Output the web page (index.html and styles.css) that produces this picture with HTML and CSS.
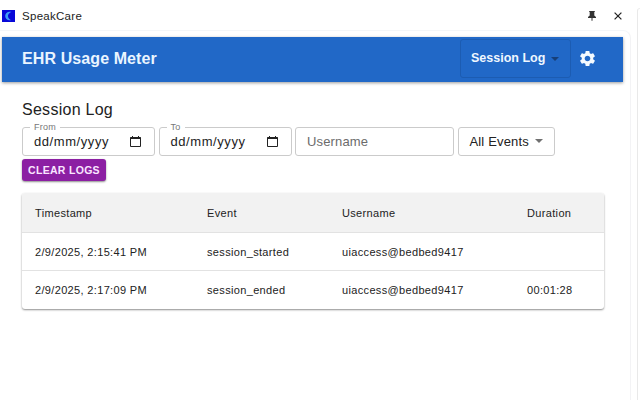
FILE: index.html
```html
<!DOCTYPE html>
<html lang="en">
<head>
<meta charset="utf-8">
<title>SpeakCare</title>
<link rel="stylesheet" href="styles.css">
</head>
<body>
<div class="window">
  <div class="panel">
    <header class="titlebar">
      <svg class="logo" width="13" height="12" viewBox="0 0 13 12"><rect width="13" height="12" fill="#0808d8"/><path d="M9.4 1.8H7C4.6 2.2 3.2 3.8 3.2 6s1.4 3.8 3.8 4.2h2C7 9 6 7.6 6 6s1.2-3 3.4-4.2z" fill="#3f9df5"/></svg>
      <span class="brand">SpeakCare</span>
      <svg class="pin" width="8" height="10" viewBox="0 0 8 10"><path d="M1.2 0h5.6v1H6.3v3.6L8 6v.9H4.5V9.5L4 10l-.5-.5V6.9H0V6l1.7-1.4V1H1.2z" fill="#333"/></svg>
      <svg class="close" width="8" height="8" viewBox="0 0 8 8"><path d="M.6.6l6.8 6.8M7.4.6L.6 7.4" stroke="#222" stroke-width="1.25"/></svg>
    </header>
    <div class="content">
      <div class="appbar">
        <h1 class="app-title">EHR Usage Meter</h1>
        <div class="view-select"><span>Session Log</span><i class="caret dark"></i></div>
        <svg class="gear" width="19" height="19" viewBox="0 0 24 24"><path fill="#f4faff" d="M19.14 12.94c.04-.3.06-.61.06-.94 0-.32-.02-.64-.07-.94l2.03-1.58c.18-.14.23-.41.12-.61l-1.92-3.32c-.12-.22-.37-.29-.59-.22l-2.39.96c-.5-.38-1.03-.7-1.62-.94l-.36-2.54c-.04-.24-.24-.41-.48-.41h-3.84c-.24 0-.43.17-.47.41l-.36 2.54c-.59.24-1.13.57-1.62.94l-2.39-.96c-.22-.08-.47 0-.59.22L2.74 8.87c-.12.21-.08.47.12.61l2.03 1.58c-.05.3-.09.63-.09.94s.02.64.07.94l-2.03 1.58c-.18.14-.23.41-.12.61l1.92 3.32c.12.22.37.29.59.22l2.39-.96c.5.38 1.03.7 1.62.94l.36 2.54c.05.24.24.41.48.41h3.84c.24 0 .44-.17.47-.41l.36-2.54c.59-.24 1.13-.56 1.62-.94l2.39.96c.22.08.47 0 .59-.22l1.92-3.32c.12-.22.07-.47-.12-.61l-2.01-1.58zM12 15.6c-1.98 0-3.6-1.62-3.6-3.6s1.62-3.6 3.6-3.6 3.6 1.62 3.6 3.6-1.62 3.6-3.6 3.6z"/></svg>
      </div>
      <main class="main">
        <h2 class="heading">Session Log</h2>
        <div class="filters">
          <div class="field date"><span class="label">From</span><span class="value">dd/mm/yyyy</span>
            <svg width="11" height="11" viewBox="0 0 11 11"><path d="M.5 1.5h10v9H.5z" fill="none" stroke="#222"/><path d="M.5 1h10v2H.5zM2 0h1v1H2zM8 0h1v1H8z" fill="#222"/></svg></div>
          <div class="field date"><span class="label">To</span><span class="value">dd/mm/yyyy</span>
            <svg width="11" height="11" viewBox="0 0 11 11"><path d="M.5 1.5h10v9H.5z" fill="none" stroke="#222"/><path d="M.5 1h10v2H.5zM2 0h1v1H2zM8 0h1v1H8z" fill="#222"/></svg></div>
          <div class="field user"><span>Username</span></div>
          <div class="field events"><span>All Events</span><i class="caret"></i></div>
        </div>
        <button class="clear">CLEAR LOGS</button>
        <div class="table">
          <div class="row head"><span>Timestamp</span><span>Event</span><span>Username</span><span>Duration</span></div>
          <div class="row"><span>2/9/2025, 2:15:41 PM</span><span>session_started</span><span>uiaccess@bedbed9417</span><span></span></div>
          <div class="row"><span>2/9/2025, 2:17:09 PM</span><span>session_ended</span><span>uiaccess@bedbed9417</span><span>00:01:28</span></div>
        </div>
      </main>
    </div>
  </div>
  <div class="neighbor"><div class="neighbor-top"></div></div>
</div>
</body>
</html>
```
FILE: styles.css
```css
* { box-sizing: border-box; }
body {
  margin: 0;
  width: 640px;
  height: 400px;
  overflow: hidden;
  background: #fff;
  color: #222;
  font-family: "Liberation Sans", Arial, sans-serif;
}
h1, h2 { margin: 0; }
svg { display: block; flex: none; }
.window { display: flex; height: 400px; }
.panel { width: 631px; }
.titlebar {
  display: flex;
  align-items: center;
  height: 30px;
  padding: 2px 9px 0 2px;
}
.brand {
  flex: 1;
  margin-left: 7px;
  font-size: 11.5px;
  letter-spacing: 0.28px;
  color: #1c1c1c;
}
.pin { margin-right: 18px; }
.content {
  height: 370px;
  padding: 6px 7px 0 2px;
  border-top: 1px solid #f3f6f9;
  border-right: 1px solid #f3f3f5;
  border-top-right-radius: 8px;
}
.appbar {
  display: flex;
  align-items: center;
  height: 45px;
  padding: 0 26px 2px 20px;
  background: #2168c7;
  box-shadow: 0 1px 3px rgba(0, 0, 0, 0.4);
}
.app-title {
  flex: 1;
  font-size: 16px;
  line-height: 20px;
  letter-spacing: 0.1px;
  color: #eaf5ff;
}
.view-select {
  display: flex;
  align-items: center;
  justify-content: space-between;
  width: 111px;
  height: 39px;
  margin-right: 7px;
  padding: 0 11px 1px 10px;
  border: 1px solid #1c5cb2;
  border-radius: 3px;
  font-size: 12.5px;
  font-weight: bold;
  letter-spacing: 0;
  color: #eff7ff;
}
.caret {
  border: 4px solid transparent;
  border-top-color: #707070;
  border-bottom: 0;
}
.caret.dark { border-top-color: #173f78; margin-top: 2px; }
.main { padding: 18px 19px 0 20px; }
.heading {
  font-size: 16px;
  font-weight: normal;
  line-height: 20px;
  letter-spacing: 0.27px;
}
.filters { display: flex; gap: 3.5px; margin-top: 7px; }
.field {
  position: relative;
  display: flex;
  align-items: center;
  justify-content: space-between;
  height: 29px;
  padding: 0 11px 1px;
  border: 1px solid #cbcbcb;
  border-radius: 3px;
  font-size: 13px;
  letter-spacing: 0.15px;
}
.date { width: 133px; padding-right: 13px; }
.date .value { letter-spacing: 0.57px; }
.label {
  position: absolute;
  top: -6px;
  left: 7px;
  padding: 0 4px;
  background: #fff;
  font-size: 9px;
  line-height: 10px;
  letter-spacing: 0.25px;
  color: #777;
}
.user { width: 159px; color: #6b6b6b; }
.events { width: 97px; }
.clear {
  display: block;
  width: 84px;
  height: 22px;
  margin-top: 3px;
  padding: 0;
  border: 0;
  border-radius: 3px;
  background: #8c1fa3;
  box-shadow: 0 1px 2px rgba(0, 0, 0, 0.45);
  font: bold 10.5px/20px "Liberation Sans", Arial, sans-serif;
  letter-spacing: 0.3px;
  color: #fae6ff;
}
.table {
  width: 582px;
  margin-top: 12px;
  border-radius: 3px;
  overflow: hidden;
  box-shadow: 0 1px 2px rgba(0, 0, 0, 0.45);
  font-size: 11px;
  letter-spacing: 0.34px;
}
.row {
  display: grid;
  grid-template-columns: 172px 135px 185px 1fr;
  align-items: center;
  height: 38px;
  padding-left: 13px;
  border-bottom: 1px solid #e2e2e2;
}
.row:last-child { border-bottom: 0; }
.head { height: 40px; background: #f2f2f2; }
.neighbor {
  width: 9px;
  padding: 8px 0 0 6px;
}
.neighbor-top {
  height: 392px;
  border-top: 1px solid #ededed;
  border-left: 1px solid #e9e9e9;
  border-top-left-radius: 4px;
}
```
